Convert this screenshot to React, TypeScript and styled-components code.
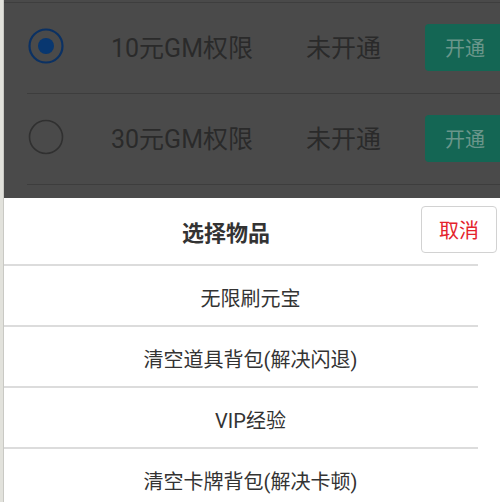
import React from 'react'
import styled, { createGlobalStyle } from 'styled-components'

const GlobalStyle = createGlobalStyle`
  html, body {
    margin: 0;
    padding: 0;
    background: #ffffff;
  }
  body {
    font-family: Roboto, "Noto Sans CJK SC", sans-serif;
  }
`

const plans = [
  { name: '10元GM权限', status: '未开通', selected: true },
  { name: '30元GM权限', status: '未开通', selected: false },
]

const items = ['无限刷元宝', '清空道具背包(解决闪退)', 'VIP经验', '清空卡牌背包(解决卡顿)']

const Radio = ({ selected }: { selected: boolean }) => (
  <RadioIcon width="36" height="36" viewBox="0 0 36 36">
    {selected ? (
      <>
        <circle cx="18" cy="18" r="16.5" fill="none" stroke="#0b3163" strokeWidth="2.2" />
        <circle cx="18" cy="18" r="8" fill="#083770" />
      </>
    ) : (
      <circle cx="18" cy="18" r="16.5" fill="none" stroke="#303030" strokeWidth="1.6" />
    )}
  </RadioIcon>
)

const App = () => {
  return (
    <>
      <GlobalStyle />
      <Screen>
        <LeftStrip />
        <Main>
          <Dimmed>
            <TopLine />
            {plans.map((plan) => (
              <PlanRow key={plan.name}>
                <Radio selected={plan.selected} />
                <PlanName>{plan.name}</PlanName>
                <PlanStatus>{plan.status}</PlanStatus>
                <OpenButton>开通</OpenButton>
              </PlanRow>
            ))}
          </Dimmed>
          <Sheet>
            <SheetHeader>
              <SheetTitle>选择物品</SheetTitle>
              <CancelButton>取消</CancelButton>
            </SheetHeader>
            {items.map((item) => (
              <React.Fragment key={item}>
                <Divider />
                <Item>{item}</Item>
              </React.Fragment>
            ))}
          </Sheet>
        </Main>
      </Screen>
    </>
  )
}

const Screen = styled.div`
  display: flex;
  width: 500px;
  height: 502px;
  overflow: hidden;
`

const LeftStrip = styled.div`
  width: 4px;
  flex-shrink: 0;
  background: #e2e2dc;
  border-right: 1px solid #c9c9c4;
  box-sizing: border-box;
`

const Main = styled.div`
  flex: 1;
  display: flex;
  flex-direction: column;
  min-width: 0;
`

const Dimmed = styled.div`
  height: 198px;
  flex-shrink: 0;
  background: #4a4a4a;
  overflow: hidden;
`

const TopLine = styled.div`
  height: 3px;
  border-bottom: 1px solid #3e3e3e;
  box-sizing: border-box;
`

const PlanRow = styled.div`
  display: flex;
  align-items: center;
  height: 91px;
  margin-left: 23px;
  padding-left: 1px;
  border-bottom: 1px solid #3d3d3d;
  box-sizing: border-box;
  overflow: hidden;
  color: #2a2a2a;
  font-size: 25px;
  & > * {
    flex-shrink: 0;
  }
`

const RadioIcon = styled.svg`
  margin-top: -4px;
`

const PlanName = styled.div`
  width: 195px;
  margin-left: 47px;
  margin-top: -4px;
  white-space: nowrap;
`

const PlanStatus = styled.div`
  width: 119px;
  margin-top: -4px;
  white-space: nowrap;
`

const OpenButton = styled.div`
  display: flex;
  align-items: center;
  padding-left: 20px;
  width: 100px;
  height: 47px;
  box-sizing: border-box;
  border-radius: 4px;
  background: #146654;
  color: #6a968b;
  font-size: 20px;
  margin-top: -2px;
`

const Sheet = styled.div`
  flex: 1;
  background: #ffffff;
  display: flex;
  flex-direction: column;
`

const SheetHeader = styled.div`
  display: flex;
  height: 66px;
  flex-shrink: 0;
`

const SheetTitle = styled.div`
  flex: 1;
  padding-left: 27px;
  display: flex;
  align-items: center;
  justify-content: center;
  font-size: 22px;
  font-weight: bold;
  color: #333333;
`

const CancelButton = styled.div`
  display: flex;
  align-items: center;
  justify-content: center;
  width: 76px;
  height: 47px;
  margin: 8px 3px 0 0;
  box-sizing: border-box;
  border: 1px solid #d2d2d2;
  border-radius: 4px;
  color: #e4232b;
  font-size: 20px;
`

const Divider = styled.div`
  height: 2px;
  flex-shrink: 0;
  margin-right: 22px;
  background: #dcdcdc;
`

const Item = styled.div`
  display: flex;
  align-items: center;
  justify-content: center;
  height: 59px;
  flex-shrink: 0;
  padding: 3px 3px 0 0;
  box-sizing: border-box;
  font-size: 20px;
  color: #333333;
  white-space: nowrap;
`

export default App
